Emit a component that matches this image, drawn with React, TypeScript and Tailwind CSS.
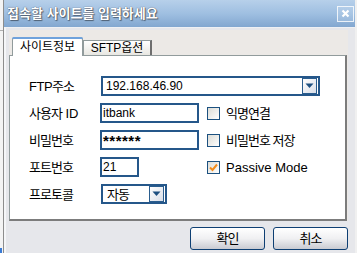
import React from "react";

const FONT = "font-['Liberation_Sans','Noto_Sans_CJK_KR',sans-serif]";

function DropBtn() {
  return (
    <div className="ml-auto mr-[1px] w-[15px] h-[16px] border border-[#2a5d8e] bg-linear-to-br from-white to-[#d9dee8] flex items-center justify-center">
      <svg width="9" height="6" viewBox="0 0 9 6">
        <polygon points="0.5,0.5 8.5,0.5 4.5,5" fill="#1d4f80" />
      </svg>
    </div>
  );
}

function Combo({ w, children, pl }: { w: string; children: React.ReactNode; pl: string }) {
  return (
    <div className={`ml-[1px] ${w} h-[20px] border-2 border-[#25578a] bg-white flex items-center`}>
      <span className={`${pl} text-black leading-none`}>{children}</span>
      <DropBtn />
    </div>
  );
}

function Input({ w, children }: { w: string; children: React.ReactNode }) {
  return (
    <div className={`${w} h-[20px] border-2 border-[#25578a] bg-white flex items-center`}>
      <span className="pl-[1px] text-black leading-none -mt-[2px]">{children}</span>
    </div>
  );
}

function Check({ checked, children, ml }: { checked?: boolean; children: React.ReactNode; ml: string }) {
  return (
    <div className={`${ml} flex items-center`}>
      <div className="w-[13px] h-[13px] border border-[#1c5180] bg-linear-to-br from-[#dcdcd6] to-white flex items-center justify-center">
        {checked && (
          <svg width="9" height="9" viewBox="0 0 9 9">
            <path d="M1 4.5 L3.5 7 L8 1.5" stroke="#f28c1c" strokeWidth="2" fill="none" />
          </svg>
        )}
      </div>
      <span className="ml-[6px] text-black leading-none">{children}</span>
    </div>
  );
}

function Label({ children }: { children: React.ReactNode }) {
  return <span className="w-[71px] text-[13px] text-black leading-none">{children}</span>;
}

const K = ({ children }: { children: React.ReactNode }) => (
  <span className="tracking-[-1px]">{children}</span>
);

export default function App() {
  return (
    <div className={`w-[357px] h-[253px] flex overflow-hidden bg-[#f4f4f4] ${FONT}`}>
      <div className="w-[3px] h-full bg-[#f4f4f4] flex flex-col">
        <div className="h-[30px]" />
        <div className="h-[1px] bg-[#b0b0b0]" />
        <div className="flex-1" />
        <div className="h-[5px] w-[2px] bg-[#3a7bd5]" />
      </div>
      <div className="w-[352px] h-full flex flex-col border-l border-[#8d8d8d]">
        <div className="h-[27px] flex items-center justify-between bg-linear-to-b from-[#b7d0ea] via-[#9fbfe1] to-[#82a7d0] pl-[3px] pr-[1px]">
          <span className="text-white font-bold text-[13px] leading-none [text-shadow:0_0_1px_#334,1px_1px_1px_rgba(0,0,0,0.45)]">
            접속할 사이트를 입력하세요
          </span>
          <div className="w-[17px] h-[16px] border border-white/80 bg-white/10 flex items-center justify-center">
            <svg width="9" height="9" viewBox="0 0 9 9">
              <path d="M1.5 1.5 L7.5 7.5 M7.5 1.5 L1.5 7.5" stroke="white" strokeWidth="2.2" />
            </svg>
          </div>
        </div>
        <div className="flex-1 bg-[#e6e7eb] border-l-2 border-[#f5f6f8] border-t border-t-[#eef0f4] pl-[3px] pr-[7px] pt-[2px] flex flex-col">
          <div className="h-[191px] bg-[#ece9e6] flex flex-col">
            <div className="h-[25px] flex items-end pl-[3px]">
              <div className="relative z-10 -mb-[1px] w-[71px] h-[19px] bg-white border border-[#919b9c] border-b-0 rounded-t-[3px] flex flex-col">
                <div className="h-[2px] bg-[#6fa2dc] rounded-t-[2px] -mx-[1px] -mt-[1px]" />
                <div className="flex-1 flex items-center justify-center text-[12px] text-black leading-none pb-[1px]">
                  사이트정보
                </div>
              </div>
              <div className="w-[69px] h-[15px] bg-linear-to-b from-white to-[#e8e7e2] border border-[#919b9c] border-r-2 border-r-[#6e6e6e] border-b-0 flex items-center justify-center text-[12px] text-black leading-none">
                SFTP옵션
              </div>
            </div>
            <div className="flex-1 mr-[1px] bg-white border-t border-l border-[#919b9c] border-r-2 border-b-2 border-r-[#7c7c7c] border-b-[#7c7c7c] pt-[20px] pl-[19px] flex flex-col gap-[7px]">
              <div className="h-[20px] flex items-center">
                <Label>
                  <span className="tracking-[-0.5px]">FTP</span>
                  <K>주소</K>
                </Label>
                <Combo w="w-[219px]" pl="pl-[3px] text-[12px]">192.168.46.90</Combo>
              </div>
              <div className="h-[20px] flex items-center">
                <Label>
                  <K>사용자</K> ID
                </Label>
                <Input w="w-[99px]">
                  <span className="text-[12px]">itbank</span>
                </Input>
                <Check ml="ml-[8px]">
                  <span className="text-[13px] tracking-[-1px]">익명연결</span>
                </Check>
              </div>
              <div className="h-[20px] flex items-center">
                <Label>
                  <K>비밀번호</K>
                </Label>
                <Input w="w-[99px]">
                  <span className="text-[15px] font-bold tracking-[0.5px] relative top-[2px]">******</span>
                </Input>
                <Check ml="ml-[8px]">
                  <span className="text-[13px] tracking-[-1px]">비밀번호 저장</span>
                </Check>
              </div>
              <div className="h-[20px] flex items-center">
                <Label>
                  <K>포트번호</K>
                </Label>
                <Input w="w-[39px]">
                  <span className="text-[12px]">21</span>
                </Input>
                <Check ml="ml-[68px]" checked>
                  <span className="text-[13px]">Passive Mode</span>
                </Check>
              </div>
              <div className="h-[20px] flex items-center">
                <Label>
                  <K>프로토콜</K>
                </Label>
                <Combo w="w-[66px]" pl="pl-[4px] text-[13px] tracking-[-1px]">자동</Combo>
              </div>
            </div>
          </div>
          <div className="mt-[6px] flex justify-end gap-[8px]">
            <div className="w-[75px] h-[23px] rounded-[3px] border border-[#0e3f73] bg-linear-to-b from-white via-[#f0f0f2] to-[#c9cbd2] flex items-center justify-center text-[13px] tracking-[-1px] text-black leading-none">
              확인
            </div>
            <div className="w-[75px] h-[23px] rounded-[3px] border border-[#0e3f73] bg-linear-to-b from-white via-[#f0f0f2] to-[#c9cbd2] flex items-center justify-center text-[13px] tracking-[-1px] text-black leading-none">
              취소
            </div>
          </div>
        </div>
      </div>
      <div className="w-[2px] h-full bg-[#f0f0f0]" />
    </div>
  );
}
